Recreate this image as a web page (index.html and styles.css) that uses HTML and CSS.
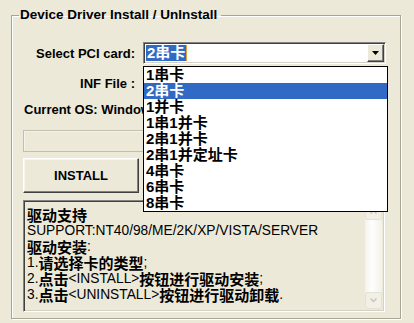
FILE: index.html
```html
<!DOCTYPE html>
<html>
<head>
<meta charset="utf-8">
<link rel="stylesheet" href="styles.css">
</head>
<body>
<div class="dialog">
  <fieldset class="group">
    <legend class="legend">Device Driver Install / UnInstall</legend>
    <div class="row row-card">
      <span class="lbl">Select PCI card:</span>
      <div class="combo">
        <span class="combo-val"><span class="sel">2串卡</span></span>
        <span class="combo-btn"><svg width="7" height="4" viewBox="0 0 7 4"><path d="M0 0h7L3.5 4z" fill="#000"/></svg></span>
        <ul class="droplist">
          <li>1串卡</li>
          <li class="hl">2串卡</li>
          <li>1并卡</li>
          <li>1串1并卡</li>
          <li>2串1并卡</li>
          <li>2串1并定址卡</li>
          <li>4串卡</li>
          <li>6串卡</li>
          <li>8串卡</li>
        </ul>
      </div>
    </div>
    <div class="row row-inf">
      <span class="lbl">INF File :</span>
      <div class="edit"></div>
    </div>
    <div class="os">Current OS: Windows XP</div>
    <div class="progress"></div>
    <div class="buttons">
      <button class="btn">INSTALL</button>
      <button class="btn">UNINSTALL</button>
    </div>
    <div class="memo">
      <div class="memo-text">
        <div class="ln"><span class="cn">驱动支持</span></div>
        <div class="ln">SUPPORT:NT40/98/ME/2K/XP/VISTA/SERVER</div>
        <div class="ln"><span class="cn">驱动安装</span>:</div>
        <div class="ln">1.<span class="cn">请选择卡的类型</span>;</div>
        <div class="ln">2.<span class="cn">点击</span>&lt;INSTALL&gt;<span class="cn">按钮进行驱动安装</span>;</div>
        <div class="ln">3.<span class="cn">点击</span>&lt;UNINSTALL&gt;<span class="cn">按钮进行驱动卸载</span>.</div>
      </div>
      <div class="scroll">
        <span class="sb-btn"><svg width="7" height="5" viewBox="0 0 7 5"><path d="M0.5 4.5L3.5 1.5L6.5 4.5" fill="none" stroke="#c8c6bc" stroke-width="1.5"/></svg></span>
        <span class="sb-track"></span>
        <span class="sb-btn"><svg width="7" height="5" viewBox="0 0 7 5"><path d="M0.5 0.5L3.5 3.5L6.5 0.5" fill="none" stroke="#c8c6bc" stroke-width="1.5"/></svg></span>
      </div>
    </div>
  </fieldset>
</div>
</body>
</html>
```
FILE: styles.css
```css
html, body {
  margin: 0;
  padding: 0;
  background: #ece9d8;
}
body {
  font-family: "Liberation Sans", "Noto Sans CJK SC", sans-serif;
  font-size: 13px;
  color: #000;
}
.dialog {
  width: 414px;
  height: 323px;
  padding: 7px 0 0 11px;
  box-sizing: border-box;
}
.group {
  margin: 0;
  width: 390px;
  height: 312px;
  box-sizing: border-box;
  border: 1px solid #a8a596;
  box-shadow: 1px 1px 0 #fff, inset 1px 1px 0 #fff;
  padding: 0 13px 0 11px;
}
.legend {
  font-weight: bold;
  font-size: 13.5px;
  line-height: 16px;
  padding: 0 4px 0 1px;
  margin-left: -4px;
}
.row {
  display: flex;
  align-items: center;
}
.lbl {
  width: 112px;
  margin-right: 8px;
  text-align: right;
  font-weight: bold;
  white-space: nowrap;
}
.row-card {
  margin-top: 19px;
}
.combo {
  position: relative;
  width: 243px;
  height: 22px;
  box-sizing: border-box;
  background: #fff;
  border: 1px solid;
  border-color: #848284 #fff #fff #848284;
  box-shadow: inset 1px 1px 0 #404040, inset -1px -1px 0 #d4d0c8;
  display: flex;
  align-items: center;
  padding: 1px 1px 2px 2px;
}
.combo-val {
  flex: 1;
  height: 16px;
  display: flex;
}
.sel {
  background: #316ac5;
  color: #fff;
  font-weight: bold;
  font-size: 15px;
  line-height: 16px;
  padding: 0 1px 0 1px;
  border-right: 1px solid #e0a040;
}
.combo-btn {
  width: 17px;
  height: 18px;
  box-sizing: border-box;
  background: #ece9d8;
  border: 1px solid;
  border-color: #fff #404040 #404040 #fff;
  box-shadow: inset -1px -1px 0 #808080;
  display: flex;
  align-items: center;
  justify-content: center;
  margin-top: 1px;
}
.droplist {
  position: absolute;
  left: -1px;
  top: 23px;
  width: 245px;
  margin: 0;
  padding: 0;
  list-style: none;
  background: #fff;
  border: 1px solid #000;
  box-sizing: border-box;
  z-index: 5;
}
.droplist li {
  height: 16px;
  line-height: 16px;
  font-size: 15px;
  font-weight: bold;
  padding-left: 2px;
}
.droplist li.hl {
  background: #316ac5;
  color: #fff;
}
.row-inf {
  margin-top: 9px;
}
.edit {
  width: 243px;
  height: 21px;
  background: #fff;
  border: 1px solid #7f9db9;
  box-sizing: border-box;
}
.os {
  margin-top: 8px;
  line-height: 16px;
  font-weight: bold;
  padding-left: 1px;
}
.progress {
  margin-top: 12px;
  height: 22px;
  box-sizing: border-box;
  border: 1px solid #c2bfb0;
  box-shadow: inset 1px 1px 0 #f4f3ec;
}
.buttons {
  margin-top: 6px;
  display: flex;
  justify-content: space-between;
}
.btn {
  width: 116px;
  height: 35px;
  box-sizing: border-box;
  font-family: "Liberation Sans", sans-serif;
  font-size: 13px;
  font-weight: bold;
  color: #000;
  background: #ece9d8;
  border: 1px solid;
  border-color: #fff #404040 #404040 #fff;
  box-shadow: inset -1px -1px 0 #808080, inset 1px 1px 0 #f6f5ee;
  padding: 0;
  margin: 0;
}
.memo {
  margin-top: 7px;
  height: 112px;
  width: 362px;
  box-sizing: border-box;
  border: 1px solid;
  border-color: #848284 #fff #fff #848284;
  box-shadow: inset 1px 1px 0 #404040, inset -1px -1px 0 #d4d0c8;
  display: flex;
  padding: 2px 2px 2px 2px;
}
.memo-text {
  flex: 1;
  padding: 4px 0 0 1px;
  white-space: nowrap;
  overflow: hidden;
  font-size: 13.75px;
}
.ln {
  height: 16px;
  line-height: 16px;
  display: flex;
  align-items: center;
}
.cn {
  font-family: "Noto Sans CJK SC", sans-serif;
  font-size: 15px;
  line-height: 16px;
  font-weight: bold;
}
.scroll {
  width: 17px;
  display: flex;
  flex-direction: column;
  background: linear-gradient(to right, #f3f2ec, #fefefe 40%, #f3f1e8);
}
.sb-btn {
  height: 17px;
  box-sizing: border-box;
  border: 1px solid #e4e2d6;
  border-radius: 2px;
  background: #f1efe6;
  display: flex;
  align-items: center;
  justify-content: center;
}
.sb-track {
  flex: 1;
}
```
